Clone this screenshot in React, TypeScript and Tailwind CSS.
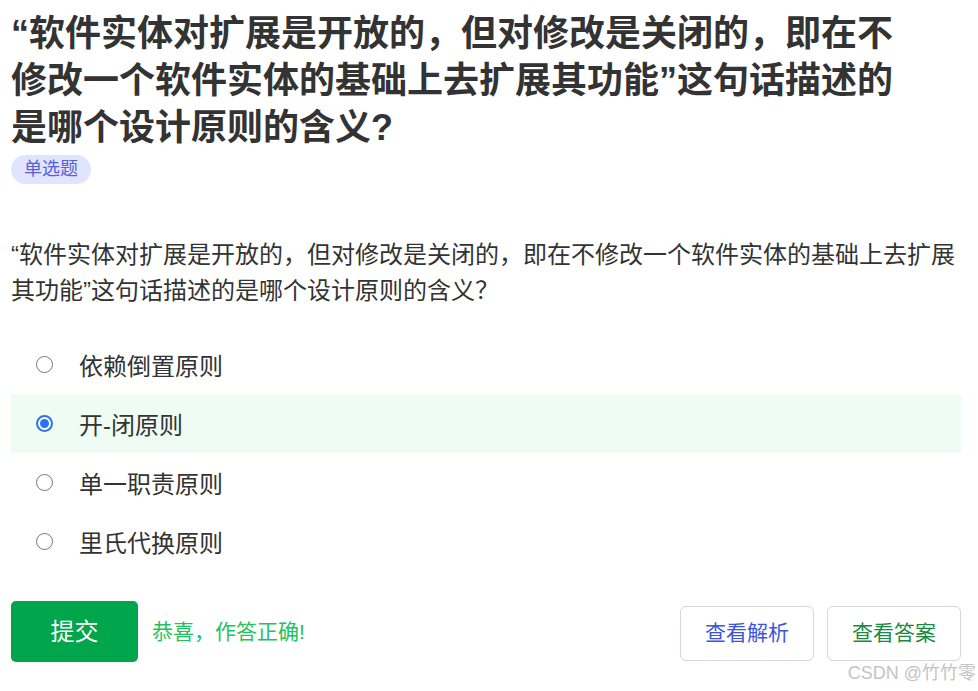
import React from "react";

const FONT = '"Liberation Sans", "Noto Sans CJK SC", sans-serif';

const options = [
  { label: "依赖倒置原则", checked: false },
  { label: "开-闭原则", checked: true },
  { label: "单一职责原则", checked: false },
  { label: "里氏代换原则", checked: false },
];

function Radio({ checked }: { checked: boolean }) {
  if (checked) {
    return (
      <span className="flex h-[17px] w-[17px] shrink-0 items-center justify-center rounded-full border-2 border-[#2a72f0] bg-white">
        <span className="h-[9px] w-[9px] rounded-full bg-[#2a72f0]" />
      </span>
    );
  }
  return (
    <span className="block h-[17px] w-[17px] shrink-0 rounded-full border-[1.5px] border-[#767676] bg-white" />
  );
}

export default function App() {
  return (
    <div
      className="relative min-h-screen bg-white pl-[11px] pr-[17px] pt-[10px] text-[#333333]"
      style={{ fontFamily: FONT }}
    >
      <h1 className="max-w-[890px] text-[36px] font-bold leading-[47px] text-[#333333]">
        “软件实体对扩展是开放的，但对修改是关闭的，即在不修改一个软件实体的基础上去扩展其功能”这句话描述的是哪个设计原则的含义?
      </h1>
      <div className="mt-[4px]">
        <span className="inline-flex h-[29px] items-center rounded-full bg-[#e0e4ff] px-[13px] text-[18px] text-[#5a5fd6]">
          单选题
        </span>
      </div>
      <p className="mt-[53px] text-[24px] leading-[36px] text-[#333333]">
        “软件实体对扩展是开放的，但对修改是关闭的，即在不修改一个软件实体的基础上去扩展其功能”这句话描述的是哪个设计原则的含义？
      </p>
      <div className="mt-[26px] flex flex-col">
        {options.map((o) => (
          <div
            key={o.label}
            className={
              o.checked
                ? "flex h-[59px] items-center bg-[#effcf3] pl-[25px]"
                : "flex h-[59px] items-center pl-[25px]"
            }
          >
            <Radio checked={o.checked} />
            <span className="ml-[26px] pt-[5px] text-[24px] leading-none text-[#333333]">
              {o.label}
            </span>
          </div>
        ))}
      </div>
      <div className="mt-[30px] flex items-center justify-between">
        <div className="flex items-center">
          <button className="flex h-[61px] w-[127px] items-center justify-center rounded-[5px] bg-[#00a54c] text-[24px] text-white">
            提交
          </button>
          <span className="ml-[14px] text-[21px] text-[#1fc35b]">恭喜，作答正确!</span>
        </div>
        <div className="flex items-center gap-[13px] pt-[3px]">
          <button className="flex h-[55px] w-[134px] items-center justify-center rounded-[6px] border border-[#d6d6dc] bg-white text-[21px] text-[#3d55dd]">
            查看解析
          </button>
          <button className="flex h-[55px] w-[134px] items-center justify-center rounded-[6px] border border-[#d6d6dc] bg-white text-[21px] text-[#1b8a40]">
            查看答案
          </button>
        </div>
      </div>
      <div className="absolute right-[2px] top-[661px] text-[18px] leading-[24px] text-[#c4c4c4]">
        CSDN @竹竹零
      </div>
    </div>
  );
}
